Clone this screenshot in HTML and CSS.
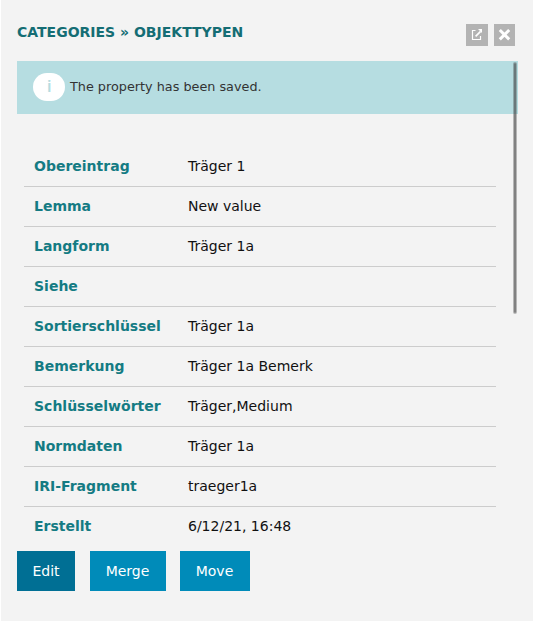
FILE: index.html
```html
<!DOCTYPE html>
<html lang="de">
<head>
<meta charset="utf-8">
<title>Categories » Objekttypen</title>
<link rel="stylesheet" href="styles.css">
</head>
<body>
<main class="panel">
  <header class="head">
    <h1 class="title">Categories » Objekttypen</h1>
    <div class="tools">
      <button class="tool tool-open" aria-label="Open">
        <svg width="22" height="22" viewBox="0 0 22 22" fill="none" stroke="#fff"><path d="M9.5 6.5H6.5V15.5H14.5V12" stroke-width="1.2"/><path d="M9.6 12.4L14.6 7.4" stroke-width="1.7"/><path d="M12 5H16V9Z" fill="#fff" stroke="none"/></svg>
      </button>
      <button class="tool tool-close" aria-label="Close">
        <svg width="21" height="22" viewBox="0 0 21 22" fill="none" stroke="#fff" stroke-width="3"><path d="M5.8 6L15.2 15.4M15.2 6L5.8 15.4"/></svg>
      </button>
    </div>
  </header>
  <section class="content">
    <div class="notice"><span class="info">i</span><span>The property has been saved.</span></div>
    <dl class="list">
      <div class="row"><dt>Obereintrag</dt><dd>Träger 1</dd></div>
      <div class="row"><dt>Lemma</dt><dd>New value</dd></div>
      <div class="row"><dt>Langform</dt><dd>Träger 1a</dd></div>
      <div class="row"><dt>Siehe</dt><dd></dd></div>
      <div class="row"><dt>Sortierschlüssel</dt><dd>Träger 1a</dd></div>
      <div class="row"><dt>Bemerkung</dt><dd>Träger 1a Bemerk</dd></div>
      <div class="row"><dt>Schlüsselwörter</dt><dd>Träger,Medium</dd></div>
      <div class="row"><dt>Normdaten</dt><dd>Träger 1a</dd></div>
      <div class="row"><dt>IRI-Fragment</dt><dd>traeger1a</dd></div>
      <div class="row"><dt>Erstellt</dt><dd>6/12/21, 16:48</dd></div>
    </dl>
    <div class="scrollbar"></div>
  </section>
  <footer class="actions">
    <button class="btn btn-edit">Edit</button>
    <button class="btn btn-merge">Merge</button>
    <button class="btn btn-move">Move</button>
  </footer>
</main>
</body>
</html>
```
FILE: styles.css
```css
* { box-sizing: border-box; }
body {
  margin: 0;
  background: #fff;
  font: 14px/20px "DejaVu Sans", sans-serif;
  color: #111;
}
.panel {
  height: 621px;
  margin-left: 1px;
  padding: 0 15px 0 16px;
  background: #f3f3f3;
  overflow: hidden;
}
.head {
  display: flex;
  justify-content: space-between;
  height: 61px;
  padding: 22px 3px 0 0;
}
.title {
  margin: 0;
  font-size: 14px;
  line-height: 20px;
  text-transform: uppercase;
  color: #146d74;
}
.tools { display: flex; gap: 6px; padding-top: 2px; }
.tool {
  height: 22px;
  padding: 0;
  border: 0;
  background: #b3b3b3;
}
.tool svg { display: block; }
.tool-open { width: 22px; }
.tool-close { width: 21px; }
.content {
  position: relative;
  height: 484px;
  overflow: hidden;
}
.notice {
  display: flex;
  align-items: center;
  gap: 5px;
  height: 53px;
  padding: 0 16px 1px;
  background: #b6dde1;
  font-size: 12.8px;
  color: #333;
}
.info {
  width: 32px;
  height: 28px;
  border-radius: 15px;
  background: #fff;
  color: #b6dde1;
  font-size: 16px;
  line-height: 28px;
  text-align: center;
  text-shadow: 0.5px 0 0 #b6dde1;
}
.list { width: 472px; margin: 33px 0 0 7px; }
.row {
  display: flex;
  height: 40px;
  padding: 9px 10px 10px;
  border-bottom: 1px solid #ccc;
}
.row dt { width: 154px; font-weight: bold; color: #147b83; }
.row dd { margin: 0; }
.scrollbar {
  position: absolute;
  top: 1px;
  right: 1px;
  width: 4px;
  height: 252px;
  border: 1px solid rgba(66, 66, 66, 0.35);
  border-radius: 2px;
  background: rgba(66, 66, 66, 0.65);
  background-clip: padding-box;
}
.actions { display: flex; padding-top: 6px; }
.btn {
  height: 40px;
  padding: 0;
  border: 0;
  background: #008bb9;
  color: #fff;
  font: 14px/20px "DejaVu Sans", sans-serif;
}
.btn-edit { width: 58px; margin-right: 15px; background: #006f94; }
.btn-merge { width: 76px; margin-right: 14px; padding-right: 1px; }
.btn-move { width: 70px; padding-right: 1px; }
```
